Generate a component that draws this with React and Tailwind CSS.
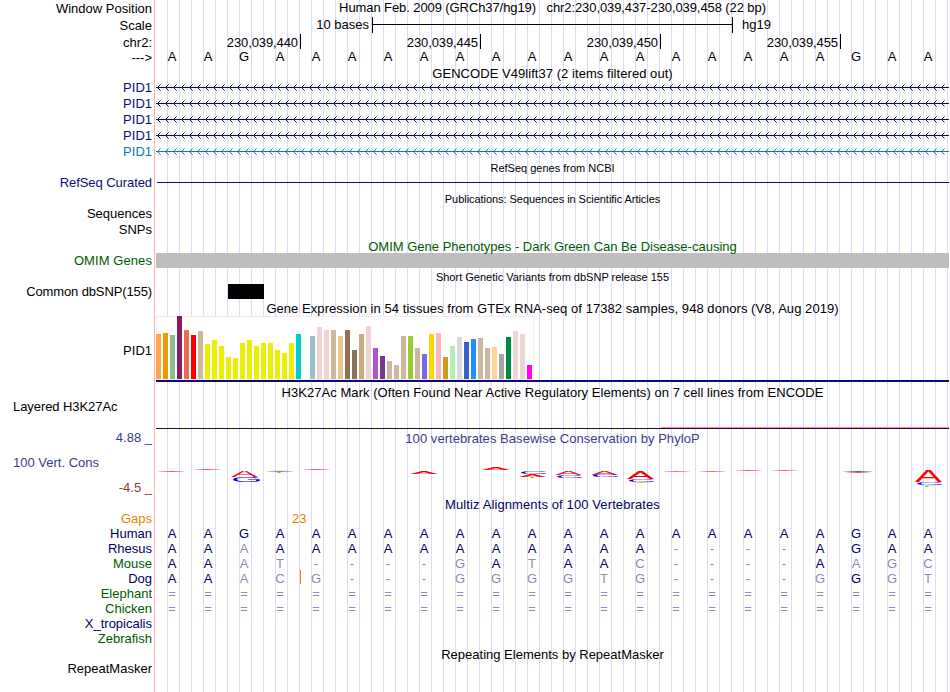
const HUMAN = "AAGAAAAAAAAAAAAAAAAGAA";

const alignments = [
    { name: "Human", seq: HUMAN },
    { name: "Rhesus", seq: "AAAAAAAAAAAAAA----AGAA" },
    { name: "Mouse", seq: "AAAT----GATAAC----AAGC" },
    { name: "Dog", seq: "AAACG---GGGGTG----GGGT" },
    { name: "Elephant", seq: "======================" },
    { name: "Chicken", seq: "======================" },
];

// [height, color] for every GTEx tissue
const tissues = [
    [45, "#ffa54f"], [46, "#ee9a00"], [44, "#8fbc8f"], [63, "#8b1c62"], [49, "#ee6a50"], [44, "#ff0000"],
    [48, "#cdb79e"], [35, "#eeee00"], [39, "#eeee00"], [33, "#eeee00"], [22, "#eeee00"], [21, "#eeee00"],
    [36, "#eeee00"], [39, "#eeee00"], [33, "#eeee00"], [36, "#eeee00"], [36, "#eeee00"], [29, "#eeee00"],
    [26, "#eeee00"], [36, "#eeee00"], [45, "#00cdcd"], [0, "#ee82ee"], [43, "#9ac0cd"], [52, "#eed5d2"],
    [49, "#eed5d2"], [49, "#cdb79e"], [43, "#eec591"], [49, "#8b7355"], [29, "#8b7355"], [45, "#cdaa7d"],
    [53, "#eed5d2"], [31, "#b452cd"], [23, "#7a378b"], [18, "#cdb79e"], [14, "#cdb79e"], [43, "#cdb79e"],
    [43, "#9acd32"], [31, "#cdb79e"], [25, "#7a67ee"], [45, "#ffd700"], [46, "#ffb6c1"], [22, "#cd9b1d"],
    [33, "#b4eeb4"], [42, "#d9d9d9"], [37, "#3a5fcd"], [40, "#1e90ff"], [41, "#cdb79e"], [31, "#cdb79e"],
    [32, "#ffd39b"], [25, "#a6a6a6"], [42, "#008b45"], [48, "#eed5d2"], [45, "#eed5d2"], [14, "#ff00ff"],
];

// conservation logo: [letter, x, y, width, height]
const logoLetters = [
    ["A", 75, 25, 27, 6], ["G", 75, 31, 30, 5],
    ["A", 254, 25, 28, 3], ["A", 326, 22, 28, 2],
    ["C", 363, 25, 30, 3], ["A", 363, 28, 27, 3],
    ["A", 399, 25, 27, 4], ["C", 399, 29, 30, 3],
    ["A", 435, 25, 27, 4], ["C", 435, 29, 30, 2],
    ["A", 471, 25, 27, 8], ["C", 471, 33, 30, 3],
    ["A", 759, 25, 27, 11], ["C", 759, 36, 30, 3],
];

// scores too small for a letter: [x, y, width, color]
const logoDashes = [
    [2, 25, 27, "#ff5050"], [38, 23, 27, "#ff5050"], [110, 25, 28, "#ff5050"], [121, 26, 4, "#00ff00"],
    [147, 23, 27, "#ff5050"], [374, 31, 4, "#00ff00"], [477, 36, 18, "#c8c850"], [507, 25, 27, "#ff6464"],
    [543, 25, 27, "#ff6464"], [579, 24, 27, "#ff6464"], [615, 24, 27, "#ff6464"],
    [687, 25, 30, "#5050ff"], [690, 26, 24, "#ff5050"], [765, 39, 18, "#e1e18c"], [769, 40, 4, "#00ff00"],
];

const logoColors = { A: "#ff0000", C: "#0000ff", G: "#0000ff" };

function Label({ className = "h-4", children }) {
    return <div className={`flex items-center justify-end pr-0.5 whitespace-pre ${className}`}>{children}</div>;
}

function Title({ className = "", children }) {
    return <div className={`flex h-[15px] items-center justify-center whitespace-pre ${className}`}>{children}</div>;
}

function Bases({ seq, className = "" }) {
    return (
        <div className={`-ml-[2px] flex h-[15px] items-center ${className}`}>
            {seq.split("").map((base, i) => (
                <span key={i} className="w-9 shrink-0 text-center">{base}</span>
            ))}
        </div>
    );
}

function AlignedBases({ seq }) {
    return (
        <div className="-ml-[2px] flex h-[15px] items-center">
            {seq.split("").map((base, i) => (
                <span
                    key={i}
                    className={`w-9 shrink-0 text-center ${base === HUMAN[i] ? "text-[#000064]" : "text-[#8c8cb9]"}`}
                >
                    {base}
                </span>
            ))}
        </div>
    );
}

function Intron({ color }) {
    const arrows = Array.from({ length: 99 }, (_, i) => 1 + i * 8);
    return (
        <svg width="793" height="16" className="block" shapeRendering="crispEdges" fill={color}>
            <rect x="0" y="7" width="793" height="1" />
            {arrows.map((x) => (
                <g key={x}>
                    <path d={`M${x + 1} 6h1v1h-1z M${x + 1} 8h1v1h-1z M${x + 2} 5h1v1h-1z M${x + 2} 9h1v1h-1z`} />
                    <path opacity="0.5" d={`M${x + 3} 4h1v1h-1z M${x + 3} 10h1v1h-1z`} />
                </g>
            ))}
        </svg>
    );
}

function ExpressionChart() {
    return (
        <svg width="793" height="69" className="block" shapeRendering="crispEdges">
            <rect x="0" y="0" width="378" height="64" fill="#eeeeee" />
            <rect x="1" y="1" width="376" height="62" fill="#ffffff" />
            {tissues.map(([h, color], i) => (
                <rect key={i} x={i * 7} y={63 - h} width="5" height={h} fill={color} />
            ))}
            <rect x="0" y="64" width="793" height="2" fill="#0c0c78" />
        </svg>
    );
}

function ConservationLogo() {
    return (
        <svg width="793" height="51" className="block">
            {logoLetters.map(([ch, x, y, w, h], i) => (
                <text
                    key={i}
                    fontSize="10"
                    fill={logoColors[ch]}
                    transform={`translate(${x} ${y + h}) scale(${w / (ch === "A" ? 6.7 : 7.4)} ${h / 6.9})`}
                >
                    {ch}
                </text>
            ))}
            {logoDashes.map(([x, y, w, color], i) => (
                <ellipse key={i} cx={x + w / 2} cy={y + 0.5} rx={w / 2} ry="0.5" fill={color} />
            ))}
        </svg>
    );
}

function Labels() {
    return (
        <div className="w-[155px] shrink-0 border-r border-[#ffb4b4]">
            <Label className="h-[17px]">Window Position</Label>
            <Label className="h-[17px]">Scale</Label>
            <Label className="h-[17px]">chr2:</Label>
            <Label className="-mt-px mb-px h-[15px]">---&gt;</Label>

            <div className="pt-3.5 text-[#0c0c78]">
                <Label>PID1</Label>
                <Label>PID1</Label>
                <Label>PID1</Label>
                <Label>PID1</Label>
                <Label className="h-4 text-[#0c78b4]">PID1</Label>
            </div>

            <Label className="mt-[15px] h-4 tracking-[-0.07px] text-[#0c0c78]">RefSeq Curated</Label>
            <Label className="mt-[15px] h-4">Sequences</Label>
            <Label>SNPs</Label>
            <Label className="mt-[15px] h-4 tracking-[0.08px] text-[#005a00]">OMIM Genes</Label>
            <Label className="mt-[15px] h-4 tracking-[-0.12px]">Common dbSNP(155)</Label>
            <Label className="mt-4 h-[69px]">PID1</Label>

            <div className="mt-3.5 flex h-4 items-center pl-[13px] tracking-[-0.07px]">Layered H3K27Ac</div>
            <Label className="mt-[15px] h-4 text-[#3c3c8c]">4.88 _</Label>
            <div className="mt-[9px] flex h-4 items-center pl-[13px] text-[#3c3c8c]">100 Vert. Cons</div>
            <Label className="mt-[9px] h-4 text-[#8c3c3c]">-4.5 _</Label>

            <div className="mt-[15px] text-[#000064]">
                <Label className="h-[15px] text-[#e68200]">Gaps</Label>
                <Label className="h-[15px]">Human</Label>
                <Label className="h-[15px]">Rhesus</Label>
                <Label className="h-[15px] text-[#005a00]">Mouse</Label>
                <Label className="h-[15px]">Dog</Label>
                <Label className="h-[15px] text-[#005a00]">Elephant</Label>
                <Label className="h-[15px] text-[#005a00]">Chicken</Label>
                <Label className="h-[15px]">X_tropicalis</Label>
                <Label className="h-[15px] text-[#005a00]">Zebrafish</Label>
            </div>

            <Label className="mt-[15px] h-4">RepeatMasker</Label>
        </div>
    );
}

function Tracks() {
    return (
        <div className="ml-px w-[793px] shrink-0 overflow-hidden bg-[repeating-linear-gradient(to_right,transparent_0_11px,#dcdcfa_11px_12px)]">
            {/* Position and ruler */}
            <Title className="mb-0.5 tracking-[-0.09px]">Human Feb. 2009 (GRCh37/hg19)   chr2:230,039,437-230,039,458 (22 bp)</Title>
            <div className="flex h-[17px]">
                <span className="w-[213px] text-right leading-4">10 bases</span>
                <div className="ml-[3px] flex h-4 w-[361px] items-center border-x border-black">
                    <div className="-mt-px h-px w-full bg-black" />
                </div>
                <span className="ml-[9px] leading-4">hg19</span>
            </div>
            <div className="flex h-[15px] text-right leading-[17px] tracking-[-0.1px]">
                <div className="h-[15px] w-[145px] border-r border-black pr-0.5">230,039,440</div>
                <div className="h-[15px] w-[180px] border-r border-black pr-0.5">230,039,445</div>
                <div className="h-[15px] w-[180px] border-r border-black pr-0.5">230,039,450</div>
                <div className="h-[15px] w-[180px] border-r border-black pr-0.5">230,039,455</div>
            </div>
            <Bases seq={HUMAN} className="mb-[2px]" />

            {/* Genes */}
            <Title className="-mb-px tracking-[0.05px]">GENCODE V49lift37 (2 items filtered out)</Title>
            <Intron color="#0c0c78" />
            <Intron color="#0c0c78" />
            <Intron color="#0c0c78" />
            <Intron color="#0c0c78" />
            <Intron color="#0c78b4" />
            <Title className="mt-px h-[15px] text-[11px]">RefSeq genes from NCBI</Title>
            <div className="mt-1.5 mb-[9px] ml-px h-px bg-[#0c0c78]" />
            <Title className="text-[11px] tracking-[-0.05px]">Publications: Sequences in Scientific Articles</Title>
            <Title className="mt-8 -mb-px text-[#005a00]">OMIM Gene Phenotypes - Dark Green Can Be Disease-causing</Title>
            <div className="h-[15px] bg-[#bebebe]" />

            {/* Variants */}
            <Title className="mt-[2px] -mb-px h-[15px] text-[11px]">Short Genetic Variants from dbSNP release 155</Title>
            <div className="ml-[72px] h-[15px] w-9 bg-black" />

            {/* Expression */}
            <Title className="mt-[2px] h-[15px] tracking-[0.055px]">Gene Expression in 54 tissues from GTEx RNA-seq of 17382 samples, 948 donors (V8, Aug 2019)</Title>
            <ExpressionChart />

            {/* Regulation */}
            <Title className="tracking-[0.05px]">H3K27Ac Mark (Often Found Near Active Regulatory Elements) on 7 cell lines from ENCODE</Title>
            <div className="mt-[27px] ml-[505px] h-px bg-[#ff82be]" />
            <div className="h-px bg-[#280a28]" />

            {/* Conservation */}
            <Title className="mt-[2px] tracking-[0.05px] text-[#3c3c8c]">100 vertebrates Basewise Conservation by PhyloP</Title>
            <ConservationLogo />
            <Title className="tracking-[0.11px] text-[#000064]">Multiz Alignments of 100 Vertebrates</Title>
            <div className="mb-px flex h-[13px] items-center pl-[136px] text-[#e68200]">23</div>
            {alignments.map((row) =>
                row.name === "Dog" ? (
                    <div key={row.name} className="relative">
                        <AlignedBases seq={row.seq} />
                        <div className="absolute -top-px left-36 h-3.5 w-px bg-[#e68200]" />
                    </div>
                ) : (
                    <AlignedBases key={row.name} seq={row.seq} />
                )
            )}
            <Title className="mt-[31px]">Repeating Elements by RepeatMasker</Title>
        </div>
    );
}

function App() {
    return (
        <div className="flex h-[692px] w-[950px] overflow-hidden bg-white font-['Liberation_Sans',Arial,sans-serif] text-[13px] text-black">
            <Labels />
            <Tracks />
        </div>
    );
}

export default App;
